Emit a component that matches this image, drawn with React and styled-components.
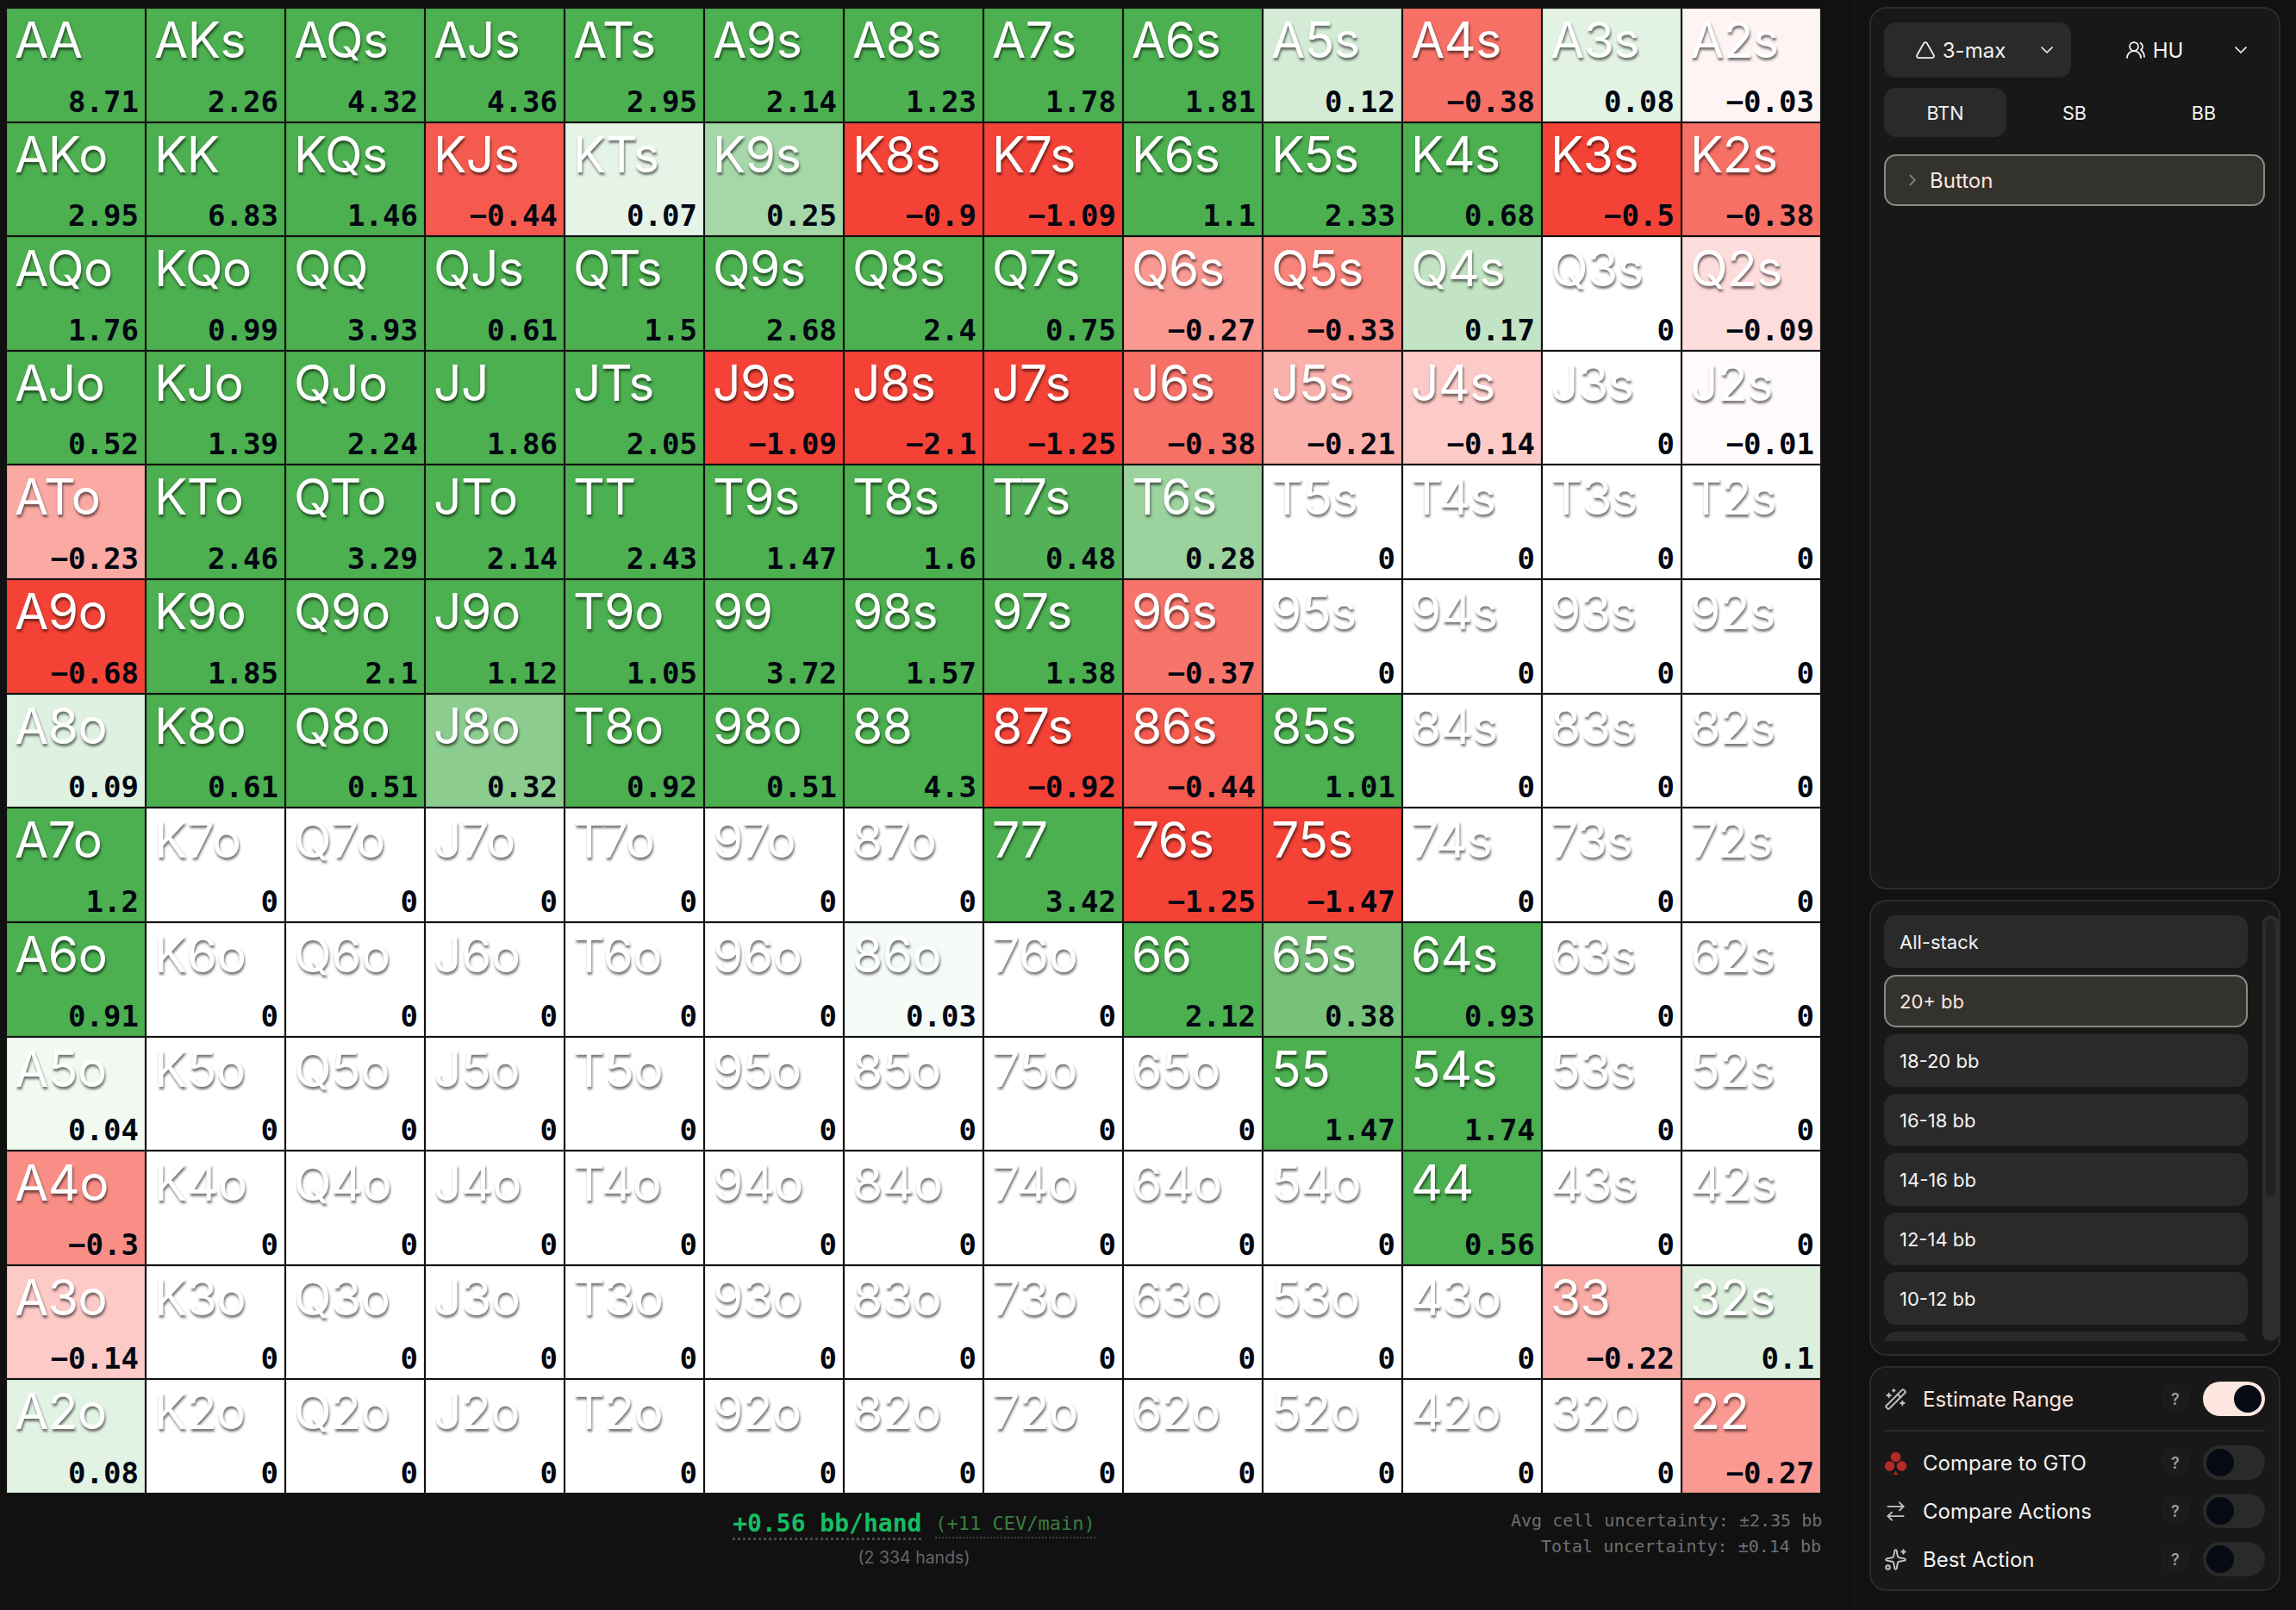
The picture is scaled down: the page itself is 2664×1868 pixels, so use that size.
import React from 'react'
import styled, { createGlobalStyle } from 'styled-components'
import {
  ArrowRightLeft,
  ChevronDown,
  ChevronRight,
  Sparkles,
  Triangle,
  UsersRound,
  WandSparkles,
} from 'lucide-react'

const RANKS = ['A', 'K', 'Q', 'J', 'T', '9', '8', '7', '6', '5', '4', '3', '2']

// bb/hand per cell, row by row
const VALUES = [
  [8.71, 2.26, 4.32, 4.36, 2.95, 2.14, 1.23, 1.78, 1.81, 0.12, -0.38, 0.08, -0.03],
  [2.95, 6.83, 1.46, -0.44, 0.07, 0.25, -0.9, -1.09, 1.1, 2.33, 0.68, -0.5, -0.38],
  [1.76, 0.99, 3.93, 0.61, 1.5, 2.68, 2.4, 0.75, -0.27, -0.33, 0.17, 0, -0.09],
  [0.52, 1.39, 2.24, 1.86, 2.05, -1.09, -2.1, -1.25, -0.38, -0.21, -0.14, 0, -0.01],
  [-0.23, 2.46, 3.29, 2.14, 2.43, 1.47, 1.6, 0.48, 0.28, 0, 0, 0, 0],
  [-0.68, 1.85, 2.1, 1.12, 1.05, 3.72, 1.57, 1.38, -0.37, 0, 0, 0, 0],
  [0.09, 0.61, 0.51, 0.32, 0.92, 0.51, 4.3, -0.92, -0.44, 1.01, 0, 0, 0],
  [1.2, 0, 0, 0, 0, 0, 0, 3.42, -1.25, -1.47, 0, 0, 0],
  [0.91, 0, 0, 0, 0, 0, 0.03, 0, 2.12, 0.38, 0.93, 0, 0],
  [0.04, 0, 0, 0, 0, 0, 0, 0, 0, 1.47, 1.74, 0, 0],
  [-0.3, 0, 0, 0, 0, 0, 0, 0, 0, 0, 0.56, 0, 0],
  [-0.14, 0, 0, 0, 0, 0, 0, 0, 0, 0, 0, -0.22, 0.1],
  [0.08, 0, 0, 0, 0, 0, 0, 0, 0, 0, 0, 0, -0.27],
]

// last one is only peeking out under the fold
const STACKS = ['All-stack', '20+ bb', '18-20 bb', '16-18 bb', '14-16 bb', '12-14 bb', '10-12 bb', '']

const handName = (row, col) => {
  if (row === col) return RANKS[row] + RANKS[col]
  if (col > row) return RANKS[row] + RANKS[col] + 's'
  return RANKS[col] + RANKS[row] + 'o'
}

// white at 0, full colour from +-0.5 bb
const cellColor = (value) => {
  const base = value < 0 ? [244, 67, 54] : [76, 175, 80]
  const amount = Math.min(Math.abs(value) / 0.5, 1)
  const mix = base.map((c) => Math.round(255 + (c - 255) * amount))
  return `rgb(${mix.join(',')})`
}

const formatValue = (value) => String(value).replace('-', '\u2212')

const GlobalStyle = createGlobalStyle`
  html, body {
    margin: 0;
    background: #111111;
  }
  * {
    box-sizing: border-box;
  }
`

const Page = styled.div`
  display: flex;
  height: 1868px;
  width: 2664px;
  overflow: hidden;
  background: #111111;
  font-family: Inter, "Liberation Sans", sans-serif;
`

const Main = styled.div`
  width: 2151px;
  padding: 10px 0 0 8px;
`

const Grid = styled.div`
  display: grid;
  grid-template-columns: repeat(13, 160px);
  grid-template-rows: repeat(13, 1fr);
  gap: 2px;
  height: 1722px;
  width: 2104px;
`

const Cell = styled.div`
  padding: 5px 7px 2px 9px;
  display: flex;
  flex-direction: column;
  justify-content: space-between;
  box-shadow: inset 0 0 0 1px rgba(0, 0, 0, 0.09);
`

const HandLabel = styled.div`
  font-size: 57px;
  line-height: 64px;
  letter-spacing: -0.5px;
  color: #ffffff;
  text-shadow: 1px 3px 3px rgba(0, 0, 0, 0.55);
`

const HandValue = styled.div`
  font-family: "DejaVu Sans Mono", monospace;
  font-weight: 700;
  font-size: 34px;
  line-height: 42px;
  text-align: right;
  color: #030712;
`

const Footer = styled.div`
  display: grid;
  grid-template-columns: 360px 1fr 360px;
  width: 2105px;
  padding-top: 20px;
`

const Stats = styled.div`
  grid-column: 2;
  text-align: center;
`

const StatLine = styled.div`
  display: flex;
  justify-content: center;
  align-items: flex-start;
  gap: 16px;
  font-family: "DejaVu Sans Mono", monospace;
`

const Winrate = styled.span`
  font-weight: 700;
  font-size: 28px;
  line-height: 32px;
  color: #16bd63;
  border-bottom: 3px dotted #4a4a4a;
`

const Cev = styled.span`
  font-size: 22px;
  line-height: 31px;
  color: #3b7d3e;
  border-bottom: 2px dotted #3f3f3f;
`

const Hands = styled.div`
  margin-top: 8px;
  font-size: 19.5px;
  line-height: 24px;
  color: #666666;
`

const Uncertainty = styled.div`
  grid-column: 3;
  margin-top: -3px;
  font-family: "DejaVu Sans Mono", monospace;
  font-size: 20px;
  line-height: 30px;
  text-align: right;
  white-space: nowrap;
  color: #6f6f6f;
`

const Sidebar = styled.div`
  flex: 1;
  display: flex;
  flex-direction: column;
  gap: 12px;
  padding: 8px 18px 20px 17px;
  border-left: 1px solid #1a1a1a;
`

const Panel = styled.div`
  background: #181818;
  border: 2px solid #2b2b2b;
  border-radius: 20px;
  padding: 16px 16px 16px 15px;
`

const TopPanel = styled(Panel)`
  height: 1024px;
  display: flex;
  flex-direction: column;
`

const SelectRow = styled.div`
  display: grid;
  grid-template-columns: 1fr 1fr;
  gap: 8px;
`

const Select = styled.div`
  height: 64px;
  display: flex;
  align-items: center;
  padding: 0 16px 0 0;
  border-radius: 14px;
  color: #f2f2f2;
  font-size: 24px;
  background: ${(p) => (p.$active ? '#2a2a2a' : 'transparent')};
`

const SelectValue = styled.div`
  flex: 1;
  display: flex;
  align-items: center;
  justify-content: center;
  gap: 8px;
`

const PositionRow = styled.div`
  display: grid;
  grid-template-columns: repeat(3, 1fr);
  gap: 8px;
  margin-top: 12px;
`

const Position = styled.div`
  height: 57px;
  display: flex;
  align-items: center;
  justify-content: center;
  border-radius: 14px;
  font-size: 21.6px;
  color: #f2f2f2;
  background: ${(p) => (p.$active ? '#2a2a2a' : 'transparent')};
`

const TreeNode = styled.div`
  height: 60px;
  margin-top: 20px;
  display: flex;
  align-items: center;
  gap: 9px;
  padding-left: 20px;
  border-radius: 14px;
  border: 2px solid #8b8982;
  background: #33322d;
  font-size: 24px;
  color: #fde6df;
  svg {
    color: #807f78;
  }
`

const StackPanel = styled(Panel)`
  height: 529px;
  display: flex;
  gap: 17px;
  padding-right: 0;
`

const StackList = styled.div`
  flex: 1;
  height: 494px;
  overflow: hidden;
  display: flex;
  flex-direction: column;
  gap: 8px;
`

const Stack = styled.div`
  flex: none;
  height: 61px;
  display: flex;
  align-items: center;
  padding-left: ${(p) => (p.$active ? 16 : 18)}px;
  border-radius: 14px;
  font-size: 22px;
  color: ${(p) => (p.$active ? '#fde6df' : '#f2f2f2')};
  background: ${(p) => (p.$active ? '#33322d' : '#2a2a2a')};
  border: ${(p) => (p.$active ? '2px solid #8b8982' : 'none')};
`

const ScrollTrack = styled.div`
  flex: none;
  width: 19px;
  height: 494px;
  padding: 4px;
  border-radius: 10px;
  background: #2d2d2d;
`

const ScrollThumb = styled.div`
  height: 322px;
  border-radius: 6px;
  background: #252122;
`

const TogglePanel = styled(Panel)`
  height: 261px;
`

const ToggleRow = styled.div`
  height: 40px;
  display: flex;
  align-items: center;
  font-size: 24px;
  color: ${(p) => (p.$active ? '#fde6df' : '#f2f2f2')};
  margin-top: ${(p) => p.$gap || 0}px;
`

const RowIcon = styled.div`
  width: 27px;
  height: 27px;
  margin-right: 18px;
  display: flex;
  color: #c4c4c4;
`

const RowLabel = styled.div`
  flex: 1;
`

const Help = styled.div`
  width: 32px;
  height: 32px;
  margin-right: 16px;
  display: flex;
  align-items: center;
  justify-content: center;
  border-radius: 50%;
  border: 1px solid #222222;
  background: #1b1b1b;
  color: #9c9c9c;
  font-size: 18px;
  font-weight: 600;
`

const Toggle = styled.div`
  width: 72px;
  height: 40px;
  padding: 4px;
  display: flex;
  justify-content: ${(p) => (p.$on ? 'flex-end' : 'flex-start')};
  border-radius: 20px;
  background: ${(p) => (p.$on ? '#fde6df' : '#2a2a2a')};
`

const Knob = styled.div`
  width: 32px;
  height: 32px;
  border-radius: 50%;
  background: #050a14;
`

const Divider = styled.div`
  height: 2px;
  margin-top: 16px;
  background: #2b2b2b;
`

const ClubIcon = () => (
  <svg viewBox="0 0 27 27" width="27" height="27" fill="#b52a25">
    <circle cx="13.5" cy="6.5" r="5.8" />
    <circle cx="6.5" cy="17" r="5.8" />
    <circle cx="20.5" cy="17" r="5.8" />
    <path d="M13.5 22.5 L16 27 H11 Z" />
  </svg>
)

const OPTIONS = [
  { label: 'Compare to GTO', icon: <ClubIcon />, gap: 16 },
  { label: 'Compare Actions', icon: <ArrowRightLeft size={27} strokeWidth={1.75} />, gap: 16 },
  { label: 'Best Action', icon: <Sparkles size={27} strokeWidth={1.75} />, gap: 16 },
]

function App() {
  return (
    <Page>
      <GlobalStyle />
      <Main>
        <Grid>
          {VALUES.map((row, r) =>
            row.map((value, c) => (
              <Cell key={`${r}-${c}`} style={{ backgroundColor: cellColor(value) }}>
                <HandLabel>{handName(r, c)}</HandLabel>
                <HandValue>{formatValue(value)}</HandValue>
              </Cell>
            ))
          )}
        </Grid>
        <Footer>
          <Stats>
            <StatLine>
              <Winrate>+0.56 bb/hand</Winrate>
              <Cev>(+11 CEV/main)</Cev>
            </StatLine>
            <Hands>(2 334 hands)</Hands>
          </Stats>
          <Uncertainty>
            Avg cell uncertainty: ±2.35 bb
            <br />
            Total uncertainty: ±0.14 bb
          </Uncertainty>
        </Footer>
      </Main>
      <Sidebar>
        <TopPanel>
          <SelectRow>
            <Select $active>
              <SelectValue>
                <Triangle size={24} strokeWidth={1.75} />
                3-max
              </SelectValue>
              <ChevronDown size={24} strokeWidth={1.75} />
            </Select>
            <Select>
              <SelectValue>
                <UsersRound size={24} strokeWidth={1.75} />
                HU
              </SelectValue>
              <ChevronDown size={24} strokeWidth={1.75} />
            </Select>
          </SelectRow>
          <PositionRow>
            <Position $active>BTN</Position>
            <Position>SB</Position>
            <Position>BB</Position>
          </PositionRow>
          <TreeNode>
            <ChevronRight size={22} />
            Button
          </TreeNode>
        </TopPanel>
        <StackPanel>
          <StackList>
            {STACKS.map((s) => (
              <Stack key={s || 'next'} $active={s === '20+ bb'}>
                {s}
              </Stack>
            ))}
          </StackList>
          <ScrollTrack>
            <ScrollThumb />
          </ScrollTrack>
        </StackPanel>
        <TogglePanel>
          <ToggleRow $active>
            <RowIcon>
              <WandSparkles size={27} strokeWidth={1.75} />
            </RowIcon>
            <RowLabel>Estimate Range</RowLabel>
            <Help>?</Help>
            <Toggle $on>
              <Knob />
            </Toggle>
          </ToggleRow>
          <Divider />
          {OPTIONS.map((o) => (
            <ToggleRow key={o.label} $gap={o.gap}>
              <RowIcon>{o.icon}</RowIcon>
              <RowLabel>{o.label}</RowLabel>
              <Help>?</Help>
              <Toggle>
                <Knob />
              </Toggle>
            </ToggleRow>
          ))}
        </TogglePanel>
      </Sidebar>
    </Page>
  )
}

export default App
